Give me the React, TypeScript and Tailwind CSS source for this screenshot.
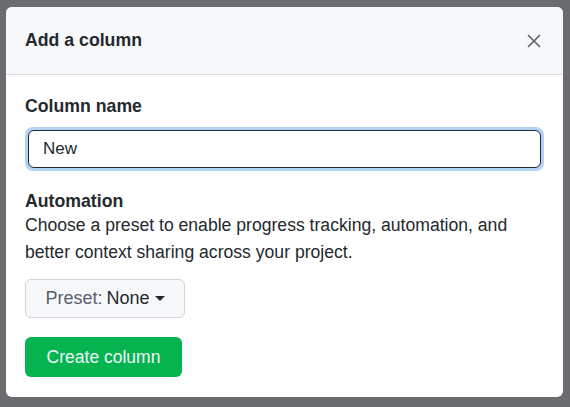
export default function App() {
  return (
    <div
      className="h-[407px] w-[570px] overflow-hidden bg-[#6a6c70] pl-[6px] pt-[7px]"
      style={{ fontFamily: '"Liberation Sans", Arial, sans-serif' }}
    >
      <div className="w-[557px] overflow-hidden rounded-[6px] bg-white">
        <div className="flex h-[68px] items-center justify-between border-b border-[#d8dcdf] bg-[#f6f8fa] pl-[19px] pr-[22px]">
          <h2 className="text-[17.7px] font-bold text-[#24292e]">Add a column</h2>
          <button aria-label="Close" className="text-[#586069]">
            <svg width="14" height="14" viewBox="0 0 14 14" fill="none" stroke="currentColor" strokeWidth="1.6" strokeLinecap="round">
              <path d="M1.5 1.5l11 11M12.5 1.5l-11 11" />
            </svg>
          </button>
        </div>
        <div className="px-[19px] pt-[20px] pb-[20px]">
          <label className="block text-[17.7px] font-bold leading-[22px] text-[#24292e]">
            Column name
          </label>
          <div className="mt-[10px] rounded-[8px] bg-[#b3d3f4] p-[3px]">
            <input
              defaultValue="New"
              className="block h-[38px] w-full rounded-[6px] border border-[#24292e] bg-white px-[14px] text-[17px] text-[#24292e] outline-none"
            />
          </div>
          <h3 className="mt-[19px] text-[17.7px] font-bold leading-[22px] text-[#24292e]">
            Automation
          </h3>
          <p className="text-[17.6px] leading-[27px] text-[#24292e]">
            Choose a preset to enable progress tracking, automation, and better context sharing across your project.
          </p>
          <button className="mt-[13px] flex h-[39px] w-[160px] items-center justify-center gap-[4px] rounded-[6px] border border-[#d1d5da] bg-[#f6f8fa] text-[18px]">
            <span className="text-[#586069]">Preset:</span>
            <span className="text-[#24292e]">None</span>
            <svg width="10" height="6" viewBox="0 0 10 6" className="ml-[1px] text-[#24292e]" fill="currentColor">
              <path d="M0 0h10L5 5z" />
            </svg>
          </button>
          <button className="mt-[19px] flex h-[40px] w-[157px] items-center justify-center rounded-[6px] bg-[#06b44f] text-[17.5px] text-[#eef4fb]">
            Create column
          </button>
        </div>
      </div>
    </div>
  );
}
